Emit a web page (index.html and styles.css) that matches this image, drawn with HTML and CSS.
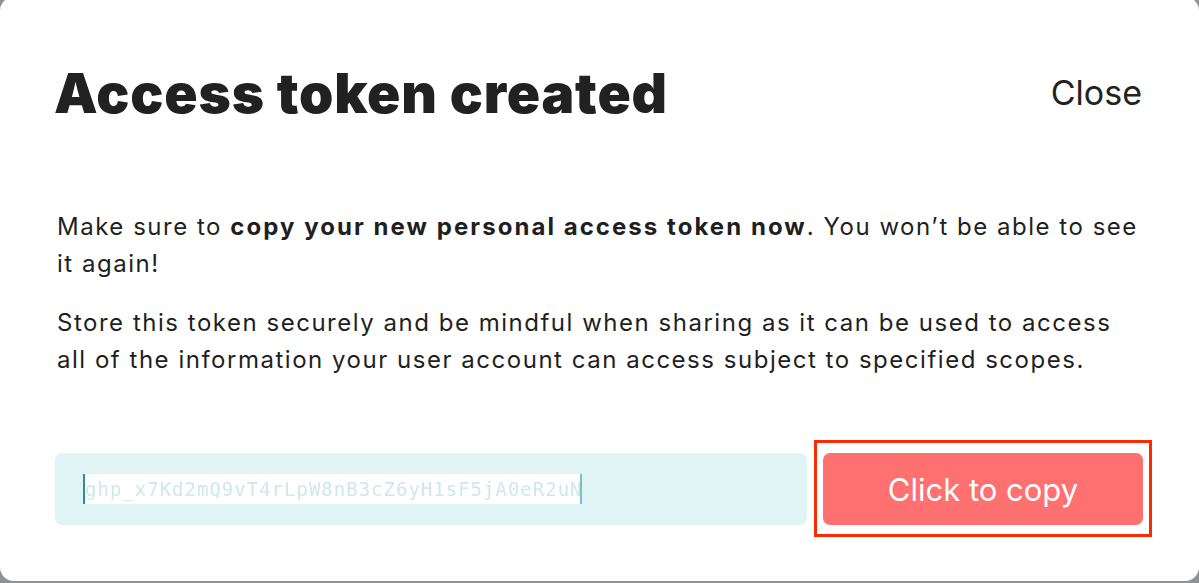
FILE: index.html
```html
<!DOCTYPE html>
<html lang="en">
<head>
<meta charset="utf-8">
<title>Access token created</title>
<link rel="stylesheet" href="styles.css">
</head>
<body>
<div class="card">
  <header class="header">
    <h1 class="title">Access token created</h1>
    <button class="close" type="button">Close</button>
  </header>
  <p class="text first">Make sure to <strong>copy your new personal access token now</strong>. You won’t be able to see it again!</p>
  <p class="text">Store this token securely and be mindful when sharing as it can be used to access all of the information your user account can access subject to specified scopes.</p>
  <div class="actions">
    <div class="field">
      <span class="token"><span class="token-text">ghp_x7Kd2mQ9vT4rLpW8nB3cZ6yH1sF5jA0eR2uN</span></span>
    </div>
    <div class="copy-wrap">
      <button class="copy" type="button">Click to copy</button>
      <span class="highlight"></span>
    </div>
  </div>
</div>
</body>
</html>
```

FILE: styles.css
```css
* { box-sizing: border-box; }

html, body {
  margin: 0;
  padding: 0;
  height: 100%;
  overflow: hidden;
}

body {
  background: #8e9296;
  font-family: Inter, "Noto Sans", "Liberation Sans", sans-serif;
  color: #1f1f1f;
}

.card {
  margin-top: -3px;
  height: 584px;
  background: #ffffff;
  border-radius: 14px;
  padding: 64px 56px 0 55px;
  display: flex;
  flex-direction: column;
}

.header {
  height: 64px;
  display: flex;
  align-items: center;
  justify-content: space-between;
}

.title {
  margin: 0 0 0 -1px;
  font-size: 55px;
  font-weight: 900;
  letter-spacing: 0.85px;
  line-height: 64px;
  color: #212121;
}

.close {
  border: 0;
  background: none;
  padding: 0;
  margin-right: 1px;
  font-family: inherit;
  font-size: 34px;
  color: #222222;
  line-height: 40px;
}

.text {
  margin: 23px 0 0 2px;
  font-size: 24px;
  letter-spacing: 1.52px;
  line-height: 36.5px;
}

.text.first { margin-top: 84px; }

.text strong { font-weight: 700; letter-spacing: 2.05px; }

.actions {
  margin-top: 75px;
  display: flex;
  gap: 16px;
  height: 72px;
}

.field {
  flex: 1;
  background: #e0f4f5;
  border-radius: 7px;
  display: flex;
  align-items: center;
  padding-left: 28px;
}

.token {
  display: block;
  width: 499px;
  height: 30px;
  background: #ffffff;
  border-left: 2px solid #2a8f96;
  border-right: 2px solid #7fc0c4;
  overflow: hidden;
  filter: blur(0.7px);
}

.token-text {
  display: block;
  font-family: "DejaVu Sans Mono", monospace;
  font-size: 19px;
  line-height: 30px;
  color: #cfe8ea;
  letter-spacing: 1px;
  white-space: nowrap;
}

.copy-wrap {
  position: relative;
  width: 320px;
}

.copy {
  width: 100%;
  height: 100%;
  border: 0;
  border-radius: 7px;
  background: #ff7070;
  color: #ffffff;
  font-family: inherit;
  font-size: 31px;
  padding: 0;
}

.highlight {
  position: absolute;
  top: -13px;
  bottom: -12px;
  left: -9px;
  right: -9px;
  border: 3px solid #fb2a00;
  pointer-events: none;
}
```
